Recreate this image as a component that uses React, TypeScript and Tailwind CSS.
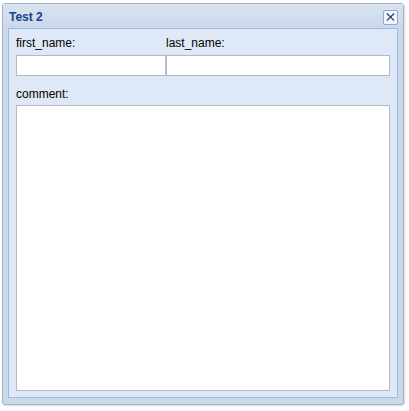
import { X } from 'lucide-react';

const font = { fontFamily: '"Liberation Sans", Arial, sans-serif' };

export default function App() {
  return (
    <div className="w-[409px] h-[411px] bg-white pt-[3px] pl-[2px]" style={font}>
      <div className="w-[402px] h-[402px] flex flex-col border border-[#a3b1c5] rounded-[3px] bg-[#cbd8ea] shadow-[1px_1px_2px_rgba(0,0,0,0.15)]">
        {/* header */}
        <div className="h-[24px] flex items-center justify-between pl-[6px] pr-[5px] bg-gradient-to-b from-[#d8e3f1] to-[#cbd8ea]">
          <span className="text-[12px] font-bold text-[#15428b] pt-[2px]">Test 2</span>
          <button className="w-[15px] h-[15px] mt-[2px] flex items-center justify-center bg-[#f2f6fc] border border-[#8fa8cc] rounded-[2px] text-[#1d3f7a]">
            <X size={14} strokeWidth={2} />
          </button>
        </div>
        {/* body */}
        <div className="flex-1 flex flex-col mx-[5px] mb-[6px] border border-[#99bbe8] bg-[#dfe8f6] px-[7px] pt-[7px] pb-[6px]">
          <div className="flex">
            <div className="w-[150px] flex flex-col">
              <label className="text-[12px] text-black leading-[14px] mb-[5px]">first_name:</label>
              <input className="h-[21px] w-[150px] bg-white border border-[#b5b8c8] outline-none" />
            </div>
            <div className="flex-1 flex flex-col">
              <label className="text-[12px] text-black leading-[14px] mb-[5px]">last_name:</label>
              <input className="h-[21px] w-full bg-white border border-[#b5b8c8] outline-none" />
            </div>
          </div>
          <label className="text-[12px] text-black leading-[14px] mt-[11px] mb-[4px]">comment:</label>
          <textarea className="flex-1 w-full bg-white border border-[#b5b8c8] outline-none resize-none" />
        </div>
      </div>
    </div>
  );
}
